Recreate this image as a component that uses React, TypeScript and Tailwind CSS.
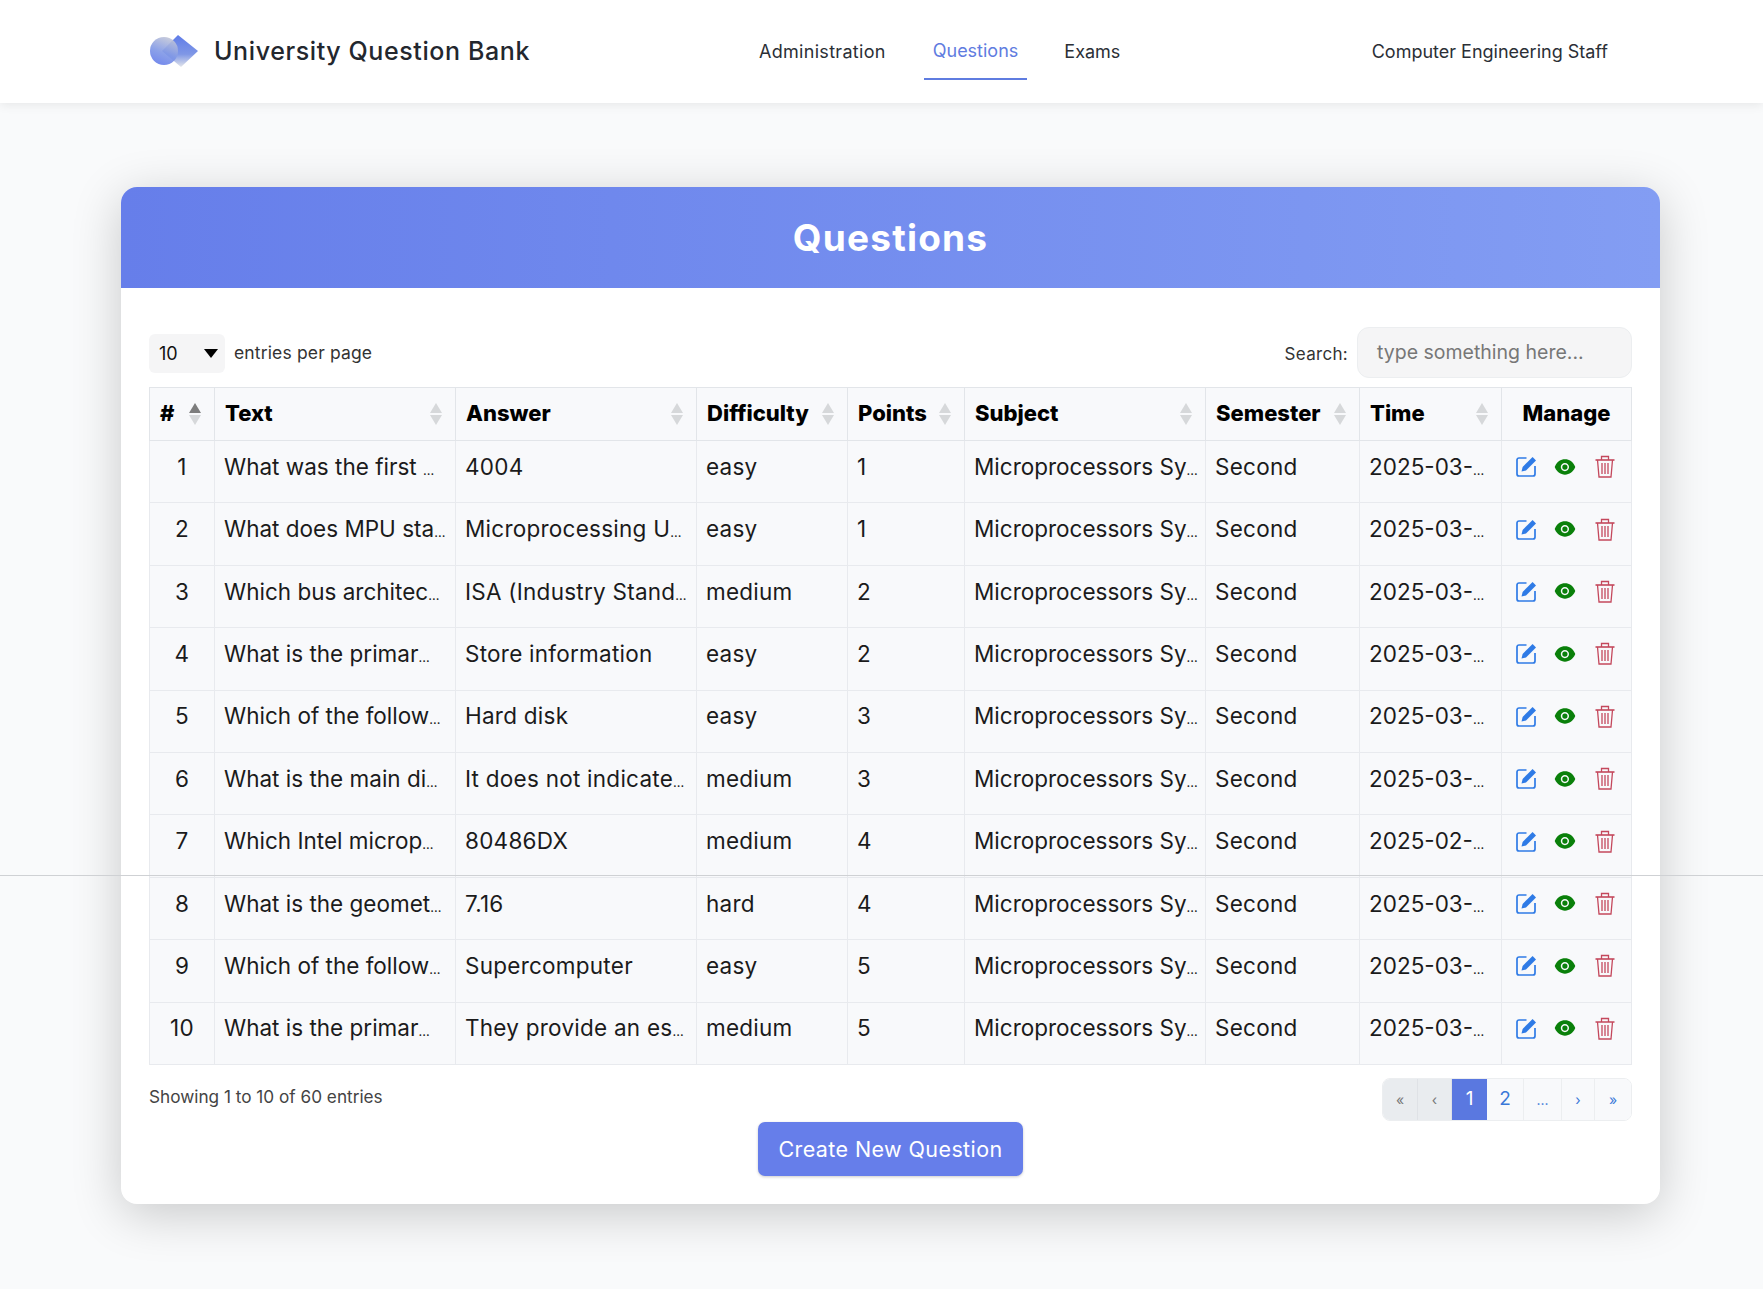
import { AiFillEye } from "react-icons/ai";

const rows = [
  ["1", "What was the first …", "4004", "easy", "1", "2025-03-…"],
  ["2", "What does MPU sta…", "Microprocessing U…", "easy", "1", "2025-03-…"],
  ["3", "Which bus architec…", "ISA (Industry Stand…", "medium", "2", "2025-03-…"],
  ["4", "What is the primar…", "Store information", "easy", "2", "2025-03-…"],
  ["5", "Which of the follow…", "Hard disk", "easy", "3", "2025-03-…"],
  ["6", "What is the main di…", "It does not indicate…", "medium", "3", "2025-03-…"],
  ["7", "Which Intel microp…", "80486DX", "medium", "4", "2025-02-…"],
  ["8", "What is the geomet…", "7.16", "hard", "4", "2025-03-…"],
  ["9", "Which of the follow…", "Supercomputer", "easy", "5", "2025-03-…"],
  ["10", "What is the primar…", "They provide an es…", "medium", "5", "2025-03-…"],
];

const headers = ["#", "Text", "Answer", "Difficulty", "Points", "Subject", "Semester", "Time"];

const SortIcon = ({ active }: { active?: boolean }) => (
  <svg width="12" height="22" viewBox="0 0 12 22" className="shrink-0">
    <polygon points="6,0 12,10 0,10" fill={active ? "#7d7d7d" : "#d6d8da"} />
    <polygon points="6,22 12,12 0,12" fill="#d6d8da" />
  </svg>
);

const Logo = () => (
  <svg width="50" height="36" viewBox="0 0 50 36">
    <defs>
      <linearGradient id="circleFill" x1="0.8" y1="0" x2="0.4" y2="1">
        <stop offset="0" stopColor="#c9cbd6" />
        <stop offset="0.6" stopColor="#7f97e6" />
        <stop offset="1" stopColor="#667eea" />
      </linearGradient>
      <linearGradient id="diamondFill" x1="0.6" y1="0" x2="0.6" y2="1">
        <stop offset="0" stopColor="#5f7ce8" />
        <stop offset="0.6" stopColor="#7f97e6" />
        <stop offset="1" stopColor="#e3e5ea" />
      </linearGradient>
    </defs>
    <polygon points="29,1 49,17 32,33 13,17" fill="url(#diamondFill)" />
    <circle cx="15" cy="17" r="14" fill="url(#circleFill)" opacity="0.9" />
  </svg>
);

const EditIcon = () => (
  <svg width="21" height="21" viewBox="0 0 21 21" className="shrink-0">
    <path d="M10.5 2H3a2 2 0 0 0-2 2v14a2 2 0 0 0 2 2h14a2 2 0 0 0 2-2V10" fill="none" stroke="#2f7be6" strokeWidth="1.7" />
    <path d="M5.5 15.5 6.6 11 16.6 1 20 4.4 10 14.4Z" fill="#2f7be6" />
  </svg>
);

const TrashIcon = () => (
  <svg width="20" height="23" viewBox="0 0 20 23" className="shrink-0">
    <g fill="none" stroke="#c4485c" strokeWidth="1.3">
      <path d="M0.5 5h19" strokeWidth="1.6" />
      <path d="M6.5 5V1.5h7V5" />
      <path d="M2.5 5 4 22h12l1.500-17" />
      <path d="M7 8v11M10 8v11M13 8v11" />
    </g>
  </svg>
);

// the reference's ellipsis is much narrower than Inter's
const Clip = ({ text }: { text: string }) =>
  text.endsWith("…") ? (
    <>
      {text.slice(0, -1)}
      <span className="text-[13px] tracking-normal">…</span>
    </>
  ) : (
    <>{text}</>
  );

export default function App() {
  return (
    <div className="relative min-h-[1289px] bg-[#f9fafb] font-['Inter',sans-serif] text-[#111]">
      <div className="absolute left-0 right-0 top-[875px] z-10 h-px bg-[#cfd1d4]" />
      <nav className="flex h-[103px] items-center bg-white pl-[149px] pr-[155px] shadow-[0_2px_10px_rgba(0,0,0,0.08)]">
        <div className="flex w-[610px] items-center gap-[15px]">
          <Logo />
          <span className="text-[25px] font-medium tracking-[0.6px] text-[#23272e]">University Question Bank</span>
        </div>
        <div className="flex h-full items-center pb-[1px] text-[18px] text-[#2b2f36]">
          <a className="mr-[38px] tracking-[0.3px]">Administration</a>
          <a className="mr-[37px] flex h-[80px] items-center self-start border-b-2 border-[#5f7ce0] px-[9px] pt-[23px] text-[#5f7ce0]">Questions</a>
          <a>Exams</a>
        </div>
        <div className="ml-auto pb-[1px] text-[18px] text-[#2b2f36]">Computer Engineering Staff</div>
      </nav>

      <main className="pl-[121px] pt-[84px]">
        <div className="w-[1539px] overflow-hidden rounded-[16px] bg-white shadow-[0_10px_50px_rgba(0,0,0,0.2)]">
          <div className="flex h-[101px] items-center justify-center bg-gradient-to-r from-[#667eea] to-[#839df3]">
            <h1 className="text-[37px] font-bold tracking-[1.2px] text-white">Questions</h1>
          </div>
          <div className="px-[28px] pb-[28px]">
            <div className="flex h-[99px] items-center justify-between pt-[32px]">
              <div className="flex items-center gap-[9px]">
                <div className="flex h-[39px] w-[76px] items-center justify-between rounded-[6px] bg-[#f5f5f6] pl-[10px] pr-[7px] text-[18px]">
                  10
                  <svg width="14" height="9" viewBox="0 0 14 9"><polygon points="0,0 14,0 7,9" fill="#000" /></svg>
                </div>
                <span className="text-[17.5px] tracking-[0.15px] text-[#333]">entries per page</span>
              </div>
              <div className="flex items-start gap-[9px]">
                <span className="mt-[13px] text-[17px] tracking-[0.3px] text-[#333]">Search:</span>
                <div className="-mt-[2px] flex h-[51px] w-[275px] items-center rounded-[12px] border border-[#eceef0] bg-[#f5f5f6] pl-[19px] text-[19.5px] text-[#777]">
                  type something here...
                </div>
              </div>
            </div>

            <table className="w-[1482px] table-fixed border-collapse bg-[#f8f9fb]">
              <colgroup>
                <col className="w-[65px]" />
                <col className="w-[241px]" />
                <col className="w-[241px]" />
                <col className="w-[151px]" />
                <col className="w-[117px]" />
                <col className="w-[241px]" />
                <col className="w-[154px]" />
                <col className="w-[142px]" />
                <col className="w-[130px]" />
              </colgroup>
              <thead>
                <tr className="h-[53px]">
                  {headers.map((h, i) => (
                    <th key={h} className="border border-[#e2e5e9] pb-[1px] pl-[10px] pr-[13px] text-left">
                      <div className="flex items-center justify-between text-[22px] font-extrabold text-black">
                        {h}
                        <SortIcon active={i === 0} />
                      </div>
                    </th>
                  ))}
                  <th className="border border-[#e2e5e9] pb-[1px] text-center text-[22px] font-extrabold text-black">Manage</th>
                </tr>
              </thead>
              <tbody>
                {rows.map((r) => (
                  <tr key={r[0]} className="h-[62.4px] text-[22.5px] tracking-[0.25px] text-[#1b1b1b]">
                    <td className="border border-[#e8eaee] pb-[10px] text-center">{r[0]}</td>
                    <td className="whitespace-nowrap border border-[#e8eaee] px-[9px] pb-[10px] tracking-normal"><Clip text={r[1]} /></td>
                    <td className="whitespace-nowrap border border-[#e8eaee] px-[9px] pb-[10px]"><Clip text={r[2]} /></td>
                    <td className="border border-[#e8eaee] px-[9px] pb-[10px]">{r[3]}</td>
                    <td className="border border-[#e8eaee] px-[9px] pb-[10px]">{r[4]}</td>
                    <td className="whitespace-nowrap border border-[#e8eaee] px-[9px] pb-[10px] tracking-normal"><Clip text="Microprocessors Sy…" /></td>
                    <td className="border border-[#e8eaee] px-[9px] pb-[10px]">Second</td>
                    <td className="whitespace-nowrap border border-[#e8eaee] px-[9px] pb-[10px] tracking-normal"><Clip text={r[5]} /></td>
                    <td className="border border-[#e8eaee] pb-[10px]">
                      <div className="flex items-center justify-center gap-[16px] pr-[2px]">
                        <EditIcon />
                        <AiFillEye className="h-[24px] w-[24px] text-[#0a800a]" />
                        <span className="ml-[2px] flex"><TrashIcon /></span>
                      </div>
                    </td>
                  </tr>
                ))}
              </tbody>
            </table>

            <div className="mt-[13px] flex items-start justify-between">
              <span className="mt-[6px] text-[17.2px] text-[#444]">Showing 1 to 10 of 60 entries</span>
              <div className="flex h-[43px] w-[250px] overflow-hidden rounded-[8px] border border-[#eceef0] text-[14px]">
                <span className="flex w-[35px] items-center justify-center border-r border-[#dfe2e6] bg-[#e9ecef] text-[#777]">«</span>
                <span className="flex w-[34px] items-center justify-center border-r border-[#dfe2e6] bg-[#e9ecef] text-[#777]">‹</span>
                <span className="flex w-[35px] items-center justify-center bg-[#5a78e0] text-[19px] text-white">1</span>
                <span className="flex w-[37px] items-center justify-center border-r border-[#eceef0] bg-[#f8f9fb] text-[19px] text-[#3a78d8]">2</span>
                <span className="flex w-[38px] items-center justify-center border-r border-[#eceef0] bg-[#f8f9fb] text-[#3a78d8]">...</span>
                <span className="flex w-[33px] items-center justify-center border-r border-[#eceef0] bg-[#f8f9fb] text-[#3a78d8]">›</span>
                <span className="flex flex-1 items-center justify-center bg-[#f8f9fb] text-[#3a78d8]">»</span>
              </div>
            </div>

            <div className="mt-[1px] flex justify-center">
              <button className="h-[54px] w-[265px] rounded-[7px] bg-[#667eea] text-[21.5px] tracking-[0.4px] text-white shadow-[0_1px_3px_rgba(0,0,0,0.2)]">
                Create New Question
              </button>
            </div>
          </div>
        </div>
      </main>
    </div>
  );
}
